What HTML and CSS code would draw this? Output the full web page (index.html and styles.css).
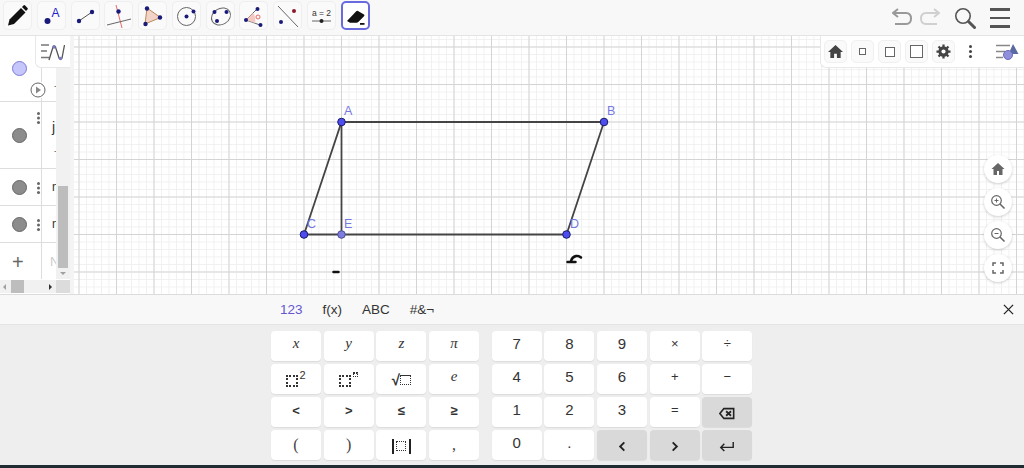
FILE: index.html
```html
<!DOCTYPE html>
<html lang="en">
<head>
    <meta charset="UTF-8">
    <title>GeoGebra</title>
    <link rel="stylesheet" href="styles.css">
</head>
<body>
    <div class="app">
        <header class="toolbar">
            <div class="tools">
                <div class="tool"><svg viewBox="0 0 29 29"><path d="M5 24.500l1.500-6L18 7l4.500 4.500L11 23z" fill="#111"/><path d="M19 6l1.500-1.500q.8-.8 1.600 0l2.400 2.400q.8.8 0 1.600L23 10z" fill="#111"/></svg></div>
                <div class="tool"><svg viewBox="0 0 29 29"><circle cx="10.500" cy="20" r="3" fill="#1a1a7a"/><text x="14.500" y="15.500" class="tool-label">A</text></svg></div>
                <div class="tool"><svg viewBox="0 0 29 29"><path d="M8 20L21 11" stroke="#555" stroke-width="1"/><circle cx="8" cy="20" r="2.200" fill="#1a1a7a"/><circle cx="21" cy="11" r="2.200" fill="#1a1a7a"/></svg></div>
                <div class="tool"><svg viewBox="0 0 29 29"><path d="M12 4l6 23" stroke="#e86a6a" stroke-width="1"/><path d="M3 24l24-6" stroke="#666" stroke-width="1"/><circle cx="14.500" cy="10.500" r="2.200" fill="#1a1a7a"/></svg></div>
                <div class="tool"><svg viewBox="0 0 29 29"><path d="M9 7l13.500 9.500L7 23z" fill="#f3d3c8" stroke="#b98a5a" stroke-width="1"/><circle cx="9" cy="7.500" r="2.200" fill="#1a1a7a"/><circle cx="22" cy="16.500" r="2.200" fill="#1a1a7a"/><circle cx="7.500" cy="23" r="2.200" fill="#1a1a7a"/></svg></div>
                <div class="tool"><svg viewBox="0 0 29 29"><circle cx="14.500" cy="15.500" r="9" fill="none" stroke="#666" stroke-width="1"/><circle cx="14.500" cy="15.500" r="2" fill="#1a1a7a"/><circle cx="21.500" cy="10.500" r="2" fill="#1a1a7a"/></svg></div>
                <div class="tool"><svg viewBox="0 0 29 29"><ellipse cx="15" cy="15.500" rx="10" ry="8" transform="rotate(-30 15 15.500)" fill="none" stroke="#666" stroke-width="1"/><circle cx="8.500" cy="11" r="2" fill="#1a1a7a"/><circle cx="20.500" cy="11" r="2" fill="#1a1a7a"/><circle cx="11" cy="20" r="2" fill="#1a1a7a"/></svg></div>
                <div class="tool"><svg viewBox="0 0 29 29"><path d="M7 19l11-11M7 19l14 5" stroke="#666" stroke-width="1"/><path d="M7 19l7-7q3 3 2 10z" fill="#f6c9c0"/><circle cx="19" cy="16" r="2" fill="none" stroke="#e86a6a" stroke-width="1"/><circle cx="7" cy="19" r="2" fill="#1a1a7a"/><circle cx="18.500" cy="8" r="2" fill="#1a1a7a"/><circle cx="21.500" cy="24" r="2" fill="#1a1a7a"/></svg></div>
                <div class="tool"><svg viewBox="0 0 29 29"><path d="M5 5l20 21" stroke="#666" stroke-width="1"/><circle cx="21" cy="10" r="2" fill="#8a1a2a"/><circle cx="8" cy="21" r="2" fill="#1a1a7a"/></svg></div>
                <div class="tool"><svg viewBox="0 0 29 29"><text x="14.500" y="15" class="slider-label">a = 2</text><path d="M5 20h19" stroke="#666" stroke-width="1"/><circle cx="14.500" cy="20" r="2" fill="#222"/></svg></div>
                <div class="tool tool-active"><svg viewBox="0 0 29 29"><path d="M6 20L15 10.500q1-1 2-.5l6 3.500q1 .8 0 1.800l-5.500 5.500q-1 1-2 1H9z" fill="#111"/><path d="M19 22h4.500v1.800H19z" fill="#111"/></svg></div>
            </div>
            <div class="actions">
                <svg class="action-undo" viewBox="0 0 20 18"><path d="M6 1L1 5l5 4" fill="none" stroke="#999" stroke-width="2"/><path d="M1 5h13q5 0 5 5.500T14 16H3" fill="none" stroke="#999" stroke-width="2"/></svg>
                <svg class="action-redo" viewBox="0 0 20 18"><path d="M14 1l5 4-5 4" fill="none" stroke="#d0d0d0" stroke-width="2"/><path d="M19 5H6q-5 0-5 5.500T6 16h11" fill="none" stroke="#d0d0d0" stroke-width="2"/></svg>
                <svg class="action-search" viewBox="0 0 22 22"><circle cx="9" cy="9" r="7.200" fill="none" stroke="#555" stroke-width="1.600"/><path d="M14.500 14.500l6 6" stroke="#555" stroke-width="3" stroke-linecap="round"/></svg>
                <div class="hamburger"><span></span><span></span><span></span></div>
            </div>
        </header>

        <main class="workspace">
            <aside class="algebra">
                <div class="algebra-rows">
                    <div class="row row-first">
                        <div class="marble-col">
                            <span class="marble marble-blue"></span>
                            <svg class="play" viewBox="0 0 16 16"><circle cx="8" cy="8" r="7" fill="none" stroke="#666" stroke-width="1"/><path d="M6 4.500l5 3.500-5 3.500z" fill="#888"/></svg>
                        </div>
                        <div class="row-text row-text-low">-</div>
                    </div>
                    <div class="row row-second">
                        <div class="marble-col"><span class="marble"></span><span class="dots"></span></div>
                        <div class="row-text row-text-stack"><span>j</span><span class="row-tick">-</span></div>
                    </div>
                    <div class="row row-short">
                        <div class="marble-col"><span class="marble"></span><span class="dots"></span></div>
                        <div class="row-text">n</div>
                    </div>
                    <div class="row row-short">
                        <div class="marble-col"><span class="marble"></span><span class="dots"></span></div>
                        <div class="row-text">n</div>
                    </div>
                    <div class="row row-add">
                        <div class="marble-col"><span class="plus">+</span></div>
                        <div class="row-text row-text-input">N</div>
                    </div>
                </div>
                <div class="vscroll"><span class="vthumb"></span><span class="varrow"></span></div>
                <div class="hscroll">
                    <div class="htrack"><span class="harrow-left"></span><span class="hthumb"></span><span class="harrow-right"></span></div>
                    <div class="scroll-corner"></div>
                </div>
                <div class="panel-tab"><svg viewBox="0 0 24 18"><path d="M0 1h8M0 7h6M0 13.500h8" stroke="#777" stroke-width="1.300"/><path d="M8 16L12 3q1-2 2.500 0L18 14q1.500 2 3 0l2.500-13" fill="none" stroke="#555" stroke-width="1.300"/><circle cx="13" cy="3" r="1.700" fill="#7a7ac0"/><circle cx="19.500" cy="14.500" r="1.700" fill="#7a7ac0"/></svg></div>
            </aside>
            <div class="divider"></div>
            <section class="canvas">
                <svg class="drawing" viewBox="74 36 950 258">
                    <g class="segments">
                        <path d="M341.500 122H604L566.500 234.500H304z"/>
                        <path d="M341.500 122V234.500"/>
                    </g>
                    <g class="ink">
                        <path d="M333.500 272h5"/>
                        <path d="M567.500 262h8"/>
                        <path d="M571 261q1-4 5-5 3-.5 5 1.500"/>
                    </g>
                    <circle class="pt" cx="341.500" cy="122" r="3.800"/>
                    <circle class="pt" cx="604" cy="122" r="3.800"/>
                    <circle class="pt" cx="304" cy="234.500" r="3.800"/>
                    <circle class="pt" cx="566.500" cy="234.500" r="3.800"/>
                    <circle class="pt pt-light" cx="341.500" cy="234.500" r="3.800"/>
                    <text class="pt-label" x="344" y="115">A</text>
                    <text class="pt-label" x="607" y="115">B</text>
                    <text class="pt-label" x="307" y="228">C</text>
                    <text class="pt-label" x="344" y="228">E</text>
                    <text class="pt-label" x="570" y="228">D</text>
                </svg>

                <div class="style-bar">
                    <div class="style-btn"><svg viewBox="0 0 16 16"><path d="M8 1L0 8.500H2.500V15H6.500V10.500H9.500V15H13.500V8.500H16z" fill="#444"/></svg></div>
                    <div class="style-btn"><span class="square square-s"></span></div>
                    <div class="style-btn"><span class="square square-m"></span></div>
                    <div class="style-btn"><span class="square square-l"></span></div>
                    <div class="style-btn"><svg viewBox="0 0 16 16"><circle cx="8" cy="8" r="4" fill="none" stroke="#444" stroke-width="3"/><path d="M8 .5V15.500M.5 8H15.500M2.700 2.700L13.300 13.300M13.300 2.700L2.700 13.300" stroke="#444" stroke-width="2.400"/><circle cx="8" cy="8" r="2.200" fill="#fff"/></svg></div>
                    <span class="style-dots"></span>
                    <svg class="style-toggle" viewBox="0 0 24 18"><path d="M1 2.500h14M1 8.500h9M1 14.500h7" stroke="#888" stroke-width="1.300"/><path d="M18 1l5.500 10h-10z" fill="#5a6aa0"/><circle cx="13" cy="12" r="4.500" fill="#8f8fdc" stroke="#6a6ac0"/></svg>
                </div>

                <div class="zoom-panel">
                    <div class="zoom-btn"><svg viewBox="0 0 16 16"><path d="M8 2L1.500 8H3.500V14H7V10H9V14H12.500V8H14.500z" fill="#666"/></svg></div>
                    <div class="zoom-btn"><svg viewBox="0 0 16 16"><circle cx="6.500" cy="6.500" r="4.800" fill="none" stroke="#666" stroke-width="1.200"/><path d="M4.500 6.500h4M6.500 4.500v4" stroke="#666"/><path d="M10 10l4.500 4.500" stroke="#666" stroke-width="1.600"/></svg></div>
                    <div class="zoom-btn"><svg viewBox="0 0 16 16"><circle cx="6.500" cy="6.500" r="4.800" fill="none" stroke="#666" stroke-width="1.200"/><path d="M4.500 6.500h4" stroke="#666"/><path d="M10 10l4.500 4.500" stroke="#666" stroke-width="1.600"/></svg></div>
                    <div class="zoom-btn"><svg viewBox="0 0 16 16"><path d="M3 6V3h3M10 3h3v3M13 10v3h-3M6 13H3v-3" fill="none" stroke="#666" stroke-width="1.500"/></svg></div>
                </div>
            </section>
        </main>

        <section class="keyboard">
            <div class="kb-tabs">
                <div class="kb-tablist">
                    <span class="kb-tab kb-tab-active">123</span>
                    <span class="kb-tab">f(x)</span>
                    <span class="kb-tab">ABC</span>
                    <span class="kb-tab">#&amp;¬</span>
                </div>
                <svg class="kb-close" viewBox="0 0 12 12"><path d="M1 1l10 10M11 1L1 11" stroke="#222" stroke-width="1.400"/></svg>
            </div>
            <div class="kb-keys">
                <div class="kb-grid kb-grid-math">
                    <div class="key key-math">x</div>
                    <div class="key key-math">y</div>
                    <div class="key key-math">z</div>
                    <div class="key key-math">π</div>
                    <div class="key"><span class="ph"></span><sup class="key-sup">2</sup></div>
                    <div class="key"><span class="ph"></span><span class="ph-sup"></span></div>
                    <div class="key"><span class="root">√</span><span class="ph ph-small ph-root"></span></div>
                    <div class="key key-math">e</div>
                    <div class="key key-sym">&lt;</div>
                    <div class="key key-sym">&gt;</div>
                    <div class="key key-sym">≤</div>
                    <div class="key key-sym">≥</div>
                    <div class="key key-paren">(</div>
                    <div class="key key-paren">)</div>
                    <div class="key"><span class="abs"><span class="ph ph-small"></span></span></div>
                    <div class="key key-paren">,</div>
                </div>
                <div class="kb-grid kb-grid-num">
                    <div class="key key-num">7</div>
                    <div class="key key-num">8</div>
                    <div class="key key-num">9</div>
                    <div class="key key-op">×</div>
                    <div class="key key-op">÷</div>
                    <div class="key key-num">4</div>
                    <div class="key key-num">5</div>
                    <div class="key key-num">6</div>
                    <div class="key key-op">+</div>
                    <div class="key key-op">−</div>
                    <div class="key key-num">1</div>
                    <div class="key key-num">2</div>
                    <div class="key key-num">3</div>
                    <div class="key key-op">=</div>
                    <div class="key key-dark"><svg viewBox="0 0 18 14"><path d="M5.500 1.500H16.500V12.500H5.500L1 7z" fill="none" stroke="#222" stroke-width="1.800"/><path d="M8 4.500l5.500 5M13.500 4.500L8 9.500" stroke="#222" stroke-width="2"/></svg></div>
                    <div class="key key-num">0</div>
                    <div class="key key-num">.</div>
                    <div class="key key-dark"><svg viewBox="0 0 10 14"><path d="M7.500 2.500L3 7l4.500 4.500" fill="none" stroke="#222" stroke-width="2"/></svg></div>
                    <div class="key key-dark"><svg viewBox="0 0 10 14"><path d="M2.500 2.500L7 7l-4.500 4.500" fill="none" stroke="#222" stroke-width="2"/></svg></div>
                    <div class="key key-dark"><svg viewBox="0 0 18 14"><path d="M16 2v6H2M6 4L2 8l4 4" fill="none" stroke="#222" stroke-width="1.600"/></svg></div>
                </div>
            </div>
        </section>
        <div class="taskbar"></div>
    </div>
</body>
</html>
```

FILE: styles.css
```css
* {
    box-sizing: border-box;
    margin: 0;
    padding: 0;
}

body {
    font-family: "Liberation Sans", Arial, sans-serif;
    overflow: hidden;
    background: #fff;
}

.app {
    width: 1024px;
    height: 468px;
    display: flex;
    flex-direction: column;
    overflow: hidden;
}

/* top toolbar */
.toolbar {
    height: 36px;
    flex: none;
    display: flex;
    justify-content: space-between;
    background: #f8f8f8;
    border-bottom: 1px solid #e4e4e4;
}

.tools {
    display: flex;
    gap: 4.75px;
    padding: 1px 0 0 3px;
}

.tool {
    width: 29px;
    height: 29px;
    background: #fafafa;
    border: 1px solid #efefef;
    border-radius: 5px;
}

.tool svg {
    display: block;
    margin: -1px;
    width: 29px;
    height: 29px;
}

.tool-active {
    background: #fff;
    border: 2px solid #6a6adf;
}

.tool-active svg {
    margin: -2px;
}

.tool-label {
    font-size: 12px;
    fill: #2222cc;
}

.slider-label {
    font-size: 8.5px;
    fill: #333;
    text-anchor: middle;
}

.actions {
    display: flex;
    align-items: flex-start;
    padding: 8px 14px 0 0;
}

.action-undo,
.action-redo {
    width: 20px;
    height: 18px;
}

.action-undo {
    margin-right: 8px;
}

.action-redo {
    margin-right: 14px;
}

.action-search {
    width: 22px;
    height: 22px;
    margin: -1px 14px 0 0;
}

.hamburger {
    width: 20px;
    display: flex;
    flex-direction: column;
    gap: 6px;
}

.hamburger span {
    height: 2.5px;
    background: #555;
}

/* main area */
.workspace {
    height: 258px;
    flex: none;
    display: flex;
}

.algebra {
    width: 70px;
    flex: none;
    position: relative;
    display: grid;
    grid-template-columns: 56px 14px;
    grid-template-rows: 243px 15px;
    background: #fff;
}

.algebra-rows {
    overflow: hidden;
}

.row {
    display: flex;
    border-bottom: 1px solid #ddd;
}

.row-first {
    height: 66px;
}

.row-second {
    height: 67px;
}

.row-short {
    height: 37px;
}

.row-add {
    height: 37px;
    border-bottom: 0;
}

.marble-col {
    width: 42px;
    flex: none;
    position: relative;
    border-right: 1px solid #ddd;
}

.marble {
    position: absolute;
    left: 12px;
    top: 11px;
    width: 15px;
    height: 15px;
    border-radius: 50%;
    background: #8c8c8c;
    border: 1px solid #666;
}

.marble-blue {
    top: 25px;
    background: #c6c6fb;
    border-color: #7a7ad8;
}

.row-second .marble {
    top: 26px;
}

.play {
    position: absolute;
    left: 30px;
    top: 46px;
    width: 16px;
    height: 16px;
    background: #fff;
}

.dots {
    position: absolute;
    left: 37px;
    top: 13px;
    width: 3px;
    height: 3px;
    border-radius: 50%;
    background: #666;
    box-shadow: 0 4.5px 0 #666, 0 9px 0 #666;
}

.row-second .dots {
    top: 10px;
}

.row-text {
    font-size: 12px;
    color: #333;
    padding: 11px 0 0 10px;
    overflow: hidden;
    white-space: nowrap;
}

.row-text-low {
    padding: 44px 0 0 12px;
    font-size: 8px;
    line-height: 12px;
}

.row-text-stack {
    display: flex;
    flex-direction: column;
    gap: 11px;
    font-size: 14px;
    padding-top: 17px;
}

.row-tick {
    font-size: 8px;
    padding-left: 2px;
}

.row-text-input {
    color: #ccc;
    font-size: 13px;
    padding-left: 8px;
}

.plus {
    position: absolute;
    left: 12px;
    top: 9px;
    font-size: 20px;
    line-height: 20px;
    color: #666;
}

.vscroll {
    background: #f1f1f1;
    position: relative;
}

.vthumb {
    position: absolute;
    left: 2px;
    top: 150px;
    width: 10px;
    height: 82px;
    background: #bdbdbd;
}

.varrow {
    position: absolute;
    left: 4px;
    top: 236px;
    border-left: 3px solid transparent;
    border-right: 3px solid transparent;
    border-top: 3px solid #a0a0a0;
}

.hscroll {
    grid-column: 1 / 3;
    display: flex;
}

.htrack {
    width: 56px;
    background: #f1f1f1;
    position: relative;
    height: 13px;
    margin-top: 1px;
}

.scroll-corner {
    width: 14px;
    height: 13px;
    margin-top: 1px;
    background: #dcdcdc;
}

.hthumb {
    position: absolute;
    left: 11px;
    top: 0;
    width: 13px;
    height: 13px;
    background: #bdbdbd;
}

.harrow-left {
    position: absolute;
    left: 3px;
    top: 4px;
    border-top: 3px solid transparent;
    border-bottom: 3px solid transparent;
    border-right: 3px solid #a0a0a0;
}

.harrow-right {
    position: absolute;
    left: 49px;
    top: 4px;
    border-top: 3px solid transparent;
    border-bottom: 3px solid transparent;
    border-left: 3px solid #333;
}

.panel-tab {
    position: absolute;
    left: 35px;
    top: 0;
    width: 35px;
    height: 32px;
    background: #fff;
    border-left: 1px solid #e8e8e8;
    border-bottom: 1px solid #e8e8e8;
    border-bottom-left-radius: 6px;
    padding: 8px 0 0 5px;
}

.panel-tab svg {
    display: block;
    width: 24px;
    height: 18px;
}

.divider {
    width: 4px;
    flex: none;
    background: #f4f4f4;
}

/* graphics view */
.canvas {
    flex: 1;
    position: relative;
    overflow: hidden;
    background-color: #fff;
    background-image:
        linear-gradient(#d4d4d4 1px, transparent 1px),
        linear-gradient(90deg, #d4d4d4 1px, transparent 1px),
        linear-gradient(#f0f0f0 1px, transparent 1px),
        linear-gradient(90deg, #f0f0f0 1px, transparent 1px);
    background-size: 37.5px 37.5px, 37.5px 37.5px, 7.5px 7.5px, 7.5px 7.5px;
    background-position: 0 10.5px, 4.5px 0, 0 3px, 4.5px 0;
}

.drawing {
    position: absolute;
    left: 0;
    top: 0;
    width: 950px;
    height: 258px;
}

.segments path {
    fill: none;
    stroke: #444;
    stroke-width: 1.8;
}

.ink path {
    fill: none;
    stroke: #111;
    stroke-width: 2.5;
    stroke-linecap: round;
}

.pt {
    fill: #4d4df0;
    stroke: #1a1a66;
    stroke-width: 1;
}

.pt-light {
    fill: #7d7de0;
    stroke: #4a4a90;
}

.pt-label {
    font-size: 12.5px;
    fill: #7777e0;
}

.style-bar {
    position: absolute;
    top: 0;
    right: 0;
    width: 204px;
    height: 32px;
    display: flex;
    align-items: center;
    gap: 4px;
    padding: 0 0 0 3px;
    background: #fff;
    border-left: 1px solid #e8e8e8;
    border-bottom: 1px solid #e8e8e8;
    border-bottom-left-radius: 6px;
}

.style-btn {
    width: 23px;
    height: 23px;
    display: flex;
    align-items: center;
    justify-content: center;
    border: 1px solid #f0f0f0;
    border-radius: 5px;
    background: #fafafa;
}

.style-btn svg {
    width: 15px;
    height: 15px;
}

.square {
    display: block;
    border: 1px solid #666;
    background: #fff;
}

.square-s {
    width: 7px;
    height: 7px;
}

.square-m {
    width: 10px;
    height: 10px;
}

.square-l {
    width: 13px;
    height: 13px;
}

.style-dots {
    width: 3px;
    height: 3px;
    margin: -10px 0 0 10px;
    border-radius: 50%;
    background: #444;
    box-shadow: 0 5px 0 #444, 0 10px 0 #444;
}

.style-toggle {
    width: 24px;
    height: 18px;
    margin-left: 19px;
}

.zoom-panel {
    position: absolute;
    top: 119px;
    right: 12px;
    display: flex;
    flex-direction: column;
    gap: 5px;
}

.zoom-btn {
    width: 28px;
    height: 28px;
    border-radius: 50%;
    background: #fff;
    box-shadow: 0 1px 3px rgba(0, 0, 0, 0.2);
    display: flex;
    align-items: center;
    justify-content: center;
}

.zoom-btn svg {
    width: 16px;
    height: 16px;
}

/* on-screen keyboard */
.keyboard {
    height: 171px;
    flex: none;
    background: #eeeeee;
    border-top: 1px solid #dcdcdc;
}

.kb-tabs {
    height: 30px;
    display: flex;
    justify-content: space-between;
    align-items: center;
    background: #f8f8f8;
    border-bottom: 1px solid #e4e4e4;
    padding: 0 10px 0 280px;
}

.kb-tablist {
    display: flex;
    gap: 20px;
}

.kb-tab {
    font-size: 13.5px;
    color: #333;
}

.kb-tab-active {
    color: #6557d2;
}

.kb-close {
    width: 11px;
    height: 11px;
}

.kb-keys {
    display: flex;
    gap: 12.6px;
    padding: 6px 0 0 271px;
}

.kb-grid {
    display: grid;
    grid-auto-rows: 29.5px;
    column-gap: 2.7px;
    row-gap: 3.5px;
}

.kb-grid-math {
    grid-template-columns: repeat(4, 50px);
}

.kb-grid-num {
    grid-template-columns: repeat(5, 50px);
}

.key {
    background: #fff;
    border-radius: 4px;
    box-shadow: 0 1px 1px rgba(0, 0, 0, 0.08);
    display: flex;
    align-items: center;
    justify-content: center;
    font-size: 14px;
    color: #333;
}

.key svg {
    width: 16px;
    height: 13px;
    margin-top: 3px;
}

.key-math {
    font-family: "Liberation Serif", serif;
    font-style: italic;
    font-size: 15px;
    padding-bottom: 4px;
}

.key-sym {
    font-weight: bold;
    font-size: 13px;
    padding-bottom: 2px;
}

.key-paren {
    font-family: "Liberation Serif", serif;
    font-size: 16px;
    color: #444;
}

.key-num {
    font-size: 15px;
    padding-bottom: 5px;
}

.key-op {
    font-size: 13px;
    padding-bottom: 4px;
}

.key-dark {
    background: #d9d9d9;
}

.ph {
    display: block;
    width: 12px;
    height: 12px;
    margin-top: 5px;
    border: 2px dotted #333;
}

.ph-small {
    width: 10px;
    height: 10px;
    margin-top: 0;
    border-width: 1.5px;
}

.ph-root {
    margin-top: 3px;
    border-top: 1px solid #333;
    width: 11px;
}

.root {
    font-size: 15px;
    font-weight: bold;
    margin-top: 2px;
}

.abs {
    display: flex;
    align-items: center;
    justify-content: center;
    width: 19px;
    height: 15px;
    margin-top: 3px;
    border-left: 2px solid #222;
    border-right: 2px solid #222;
}

.key-sup {
    font-size: 11px;
    line-height: 1;
    margin: -7px 0 0 1px;
}

.ph-sup {
    display: block;
    width: 5px;
    height: 5px;
    margin: -9px 0 0 2px;
    border: 1.5px dotted #333;
    border-top-width: 2px;
}

.taskbar {
    height: 3px;
    flex: none;
    background: #1f2d33;
}
```
